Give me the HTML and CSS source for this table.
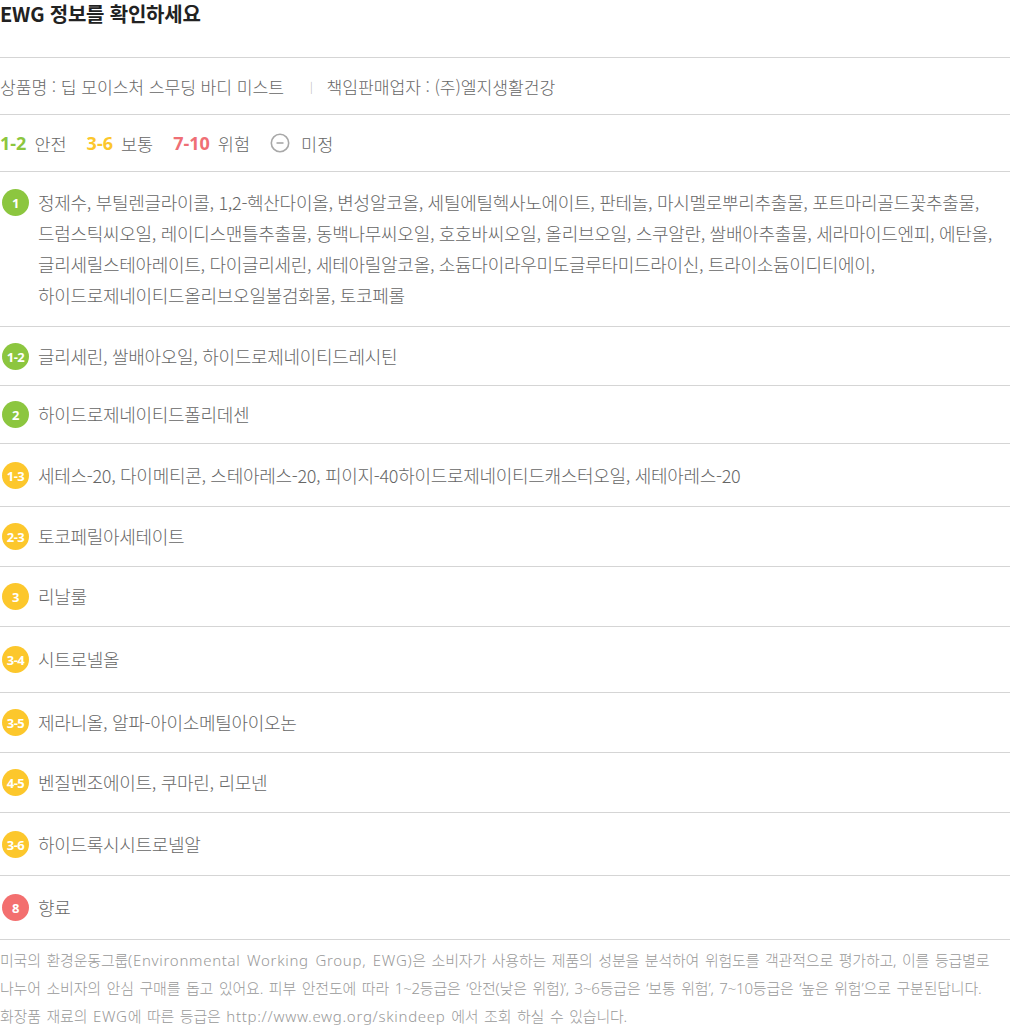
FILE: index.html
```html
<!DOCTYPE html>
<html lang="ko">
<head>
<meta charset="utf-8">
<link rel="stylesheet" href="styles.css">
</head>
<body>
<div class="ewg">
  <h2 class="title">EWG 정보를 확인하세요</h2>
  <div class="product">
    <span>상품명 : 딥 모이스처 스무딩 바디 미스트</span>
    <span class="sep">|</span>
    <span>책임판매업자 : (주)엘지생활건강</span>
  </div>
  <div class="legend">
    <span class="lg"><b class="num green">1-2</b>안전</span>
    <span class="lg"><b class="num yellow">3-6</b>보통</span>
    <span class="lg"><b class="num red">7-10</b>위험</span>
    <span class="lg"><svg class="minus" width="20" height="20" viewBox="0 0 20 20"><circle cx="10" cy="10" r="8.7" fill="none" stroke="#a8a8a8" stroke-width="1.6"/><line x1="6.5" y1="10" x2="13.5" y2="10" stroke="#a8a8a8" stroke-width="1.6"/></svg>미정</span>
  </div>
  <ul class="list">
    <li class="row first"><span class="badge g">1</span><p class="names">정제수, 부틸렌글라이콜, 1,2-헥산다이올, 변성알코올, 세틸에틸헥사노에이트, 판테놀, 마시멜로뿌리추출물, 포트마리골드꽃추출물, 드럼스틱씨오일, 레이디스맨틀추출물, 동백나무씨오일, 호호바씨오일, 올리브오일, 스쿠알란, 쌀배아추출물, 세라마이드엔피, 에탄올, 글리세릴스테아레이트, 다이글리세린, 세테아릴알코올, 소듐다이라우미도글루타미드라이신, 트라이소듐이디티에이, 하이드로제네이티드올리브오일불검화물, 토코페롤</p></li>
    <li class="row s"><span class="badge g">1-2</span><p class="names">글리세린, 쌀배아오일, 하이드로제네이티드레시틴</p></li>
    <li class="row xs"><span class="badge g">2</span><p class="names">하이드로제네이티드폴리데센</p></li>
    <li class="row m"><span class="badge y">1-3</span><p class="names">세테스-20, 다이메티콘, 스테아레스-20, 피이지-40하이드로제네이티드캐스터오일, 세테아레스-20</p></li>
    <li class="row"><span class="badge y">2-3</span><p class="names">토코페릴아세테이트</p></li>
    <li class="row"><span class="badge y">3</span><p class="names">리날룰</p></li>
    <li class="row l"><span class="badge y">3-4</span><p class="names">시트로넬올</p></li>
    <li class="row"><span class="badge y">3-5</span><p class="names">제라니올, 알파-아이소메틸아이오논</p></li>
    <li class="row"><span class="badge y">4-5</span><p class="names">벤질벤조에이트, 쿠마린, 리모넨</p></li>
    <li class="row m"><span class="badge y">3-6</span><p class="names">하이드록시시트로넬알</p></li>
    <li class="row m2"><span class="badge r">8</span><p class="names">향료</p></li>
  </ul>
  <p class="note">미국의 환경운동그룹<span class="en">(Environmental Working Group, EWG)</span>은 소비자가 사용하는 제품의 성분을 분석하여 위험도를 객관적으로 평가하고, 이를 등급별로 나누어 소비자의 안심 구매를 돕고 있어요. 피부 안전도에 따라 1~2등급은 ‘안전(낮은 위험)’, 3~6등급은 ‘보통 위험’, 7~10등급은 ‘높은 위험’으로 구분된답니다. 화장품 재료의 <span class="en">EWG</span>에 따른 등급은 <span class="en">http://www.ewg.org/skindeep</span> 에서 조회 하실 수 있습니다.</p>
</div>
</body>
</html>
```

FILE: styles.css
```css
* { box-sizing: border-box; }
html, body { margin: 0; padding: 0; background: #fff; }
body {
  font-family: "Noto Sans CJK KR", "Noto Sans", sans-serif;
  color: #666;
}
.ewg { width: 1010px; }
.title {
  margin: 0;
  height: 58px;
  padding-top: 0;
  font-size: 20px;
  line-height: 28px;
  font-weight: 700;
  color: #222;
  border-bottom: 1px solid #d5d5d5;
  letter-spacing: -0.2px;
}
.product {
  height: 57px;
  display: flex;
  align-items: center;
  font-size: 17.2px;
  color: #666;
  border-bottom: 1px solid #d5d5d5;
  font-weight: 300;
  letter-spacing: -0.1px;
}
.sep { color: #aaa; font-size: 11px; margin: 0 14px 0 26px; }
.legend {
  height: 57px;
  display: flex;
  align-items: center;
  gap: 20px;
  font-size: 17.5px;
  font-weight: 300;
  color: #666;
  border-bottom: 1px solid #d5d5d5;
}
.lg { display: inline-flex; align-items: center; }
.num {
  font-family: "Open Sans", "Noto Sans", sans-serif;
  font-weight: 700;
  font-size: 18px;
  margin-right: 8px;
}
.green { color: #8cc63f; }
.yellow { color: #fcc72c; }
.red { color: #ef6f75; }
.minus { margin: 0 11px 0 0; }
.list { list-style: none; margin: 0; padding: 0; }
.row {
  display: flex;
  align-items: flex-start;
  padding: 14px 0 14px 2px;
  border-bottom: 1px solid #d5d5d5;
}
.row.first { padding: 15px 0 15px 2px; }
.row.xs { padding: 13px 0 13px 2px; }
.row.s { padding: 14px 0 13px 2px; }
.row.m { padding: 16px 0 15px 2px; }
.row.m2 { padding: 16px 0 16px 2px; }
.row.l { padding: 17px 0 17px 2px; }
.badge {
  flex: none;
  width: 27px;
  height: 27px;
  margin-top: 2px;
  margin-right: 9px;
  border-radius: 50%;
  display: flex;
  align-items: center;
  justify-content: center;
  color: #fff;
  font-family: "Open Sans", "Noto Sans", sans-serif;
  font-weight: 700;
  font-size: 13px;
  letter-spacing: -0.5px;
}
.badge.g { background: #8cc63f; }
.badge.y { background: #fcc72c; }
.badge.r { background: #f36f6f; }
.names {
  margin: 0;
  font-size: 18px;
  line-height: 31px;
  font-weight: 300;
  color: #666;
  letter-spacing: -0.3px;
  word-break: keep-all;
}
.note {
  margin: 0;
  padding-top: 6px;
  font-family: "Noto Sans", "Noto Sans CJK KR", sans-serif;
  font-size: 15px;
  line-height: 28px;
  font-weight: 300;
  color: #999;
  letter-spacing: -0.2px;
  word-spacing: 2px;
  word-break: keep-all;
}
.en { letter-spacing: 0.7px; }
```
